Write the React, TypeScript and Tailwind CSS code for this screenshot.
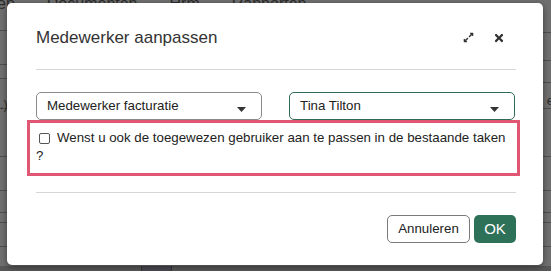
import { FaExpandAlt, FaTimes } from "react-icons/fa";

const leftLines = [30, 64, 78, 108, 156, 190, 212, 222, 246];
const rightLines = [32, 60, 82, 108, 156, 190, 212, 222, 246];

function Caret() {
  return (
    <svg width="9" height="5" viewBox="0 0 9 5" className="shrink-0">
      <path d="M0 0 L9 0 L4.5 5 Z" fill="#333" />
    </svg>
  );
}

function Select({ value, focused }: { value: string; focused?: boolean }) {
  return (
    <div
      className={
        focused
          ? "flex h-[28px] w-[226px] items-center justify-between rounded-[5px] border border-[#2f6b56] pl-[10px] pr-[15px]"
          : "flex h-[28px] w-[226px] items-center justify-between rounded-[5px] border border-[#8a8a8a] pl-[10px] pr-[15px]"
      }
    >
      <span className="text-[13.3px] text-[#222]">{value}</span>
      <span className="mt-[6px]">
        <Caret />
      </span>
    </div>
  );
}

export default function App() {
  return (
    <div
      className="relative h-[271px] w-[551px] overflow-hidden bg-[#6f6f6f]"
      style={{ fontFamily: '"Liberation Sans", Arial, sans-serif' }}
    >
      {/* Pagina achter de overlay */}
      <div className="absolute -top-[8px] left-[-3px] flex gap-[32px] text-[16px] text-[#2b2b2b]">
        <span>ep</span>
        <span>Documenten</span>
        <span>Hrm</span>
        <span>Rapporten</span>
      </div>
      {leftLines.map((y) => (
        <div
          key={"l" + y}
          className="absolute left-0 h-px w-[8px] bg-[#4e4e4e]"
          style={{ top: y }}
        />
      ))}
      {rightLines.map((y) => (
        <div
          key={"r" + y}
          className="absolute right-0 h-px w-[9px] bg-[#4e4e4e]"
          style={{ top: y }}
        />
      ))}
      <div className="absolute left-0 top-[95px] text-[13px] text-[#2b2b2b]">.)</div>
      <div className="absolute right-[-3px] top-[91px] text-[13px] text-[#2b2b2b]">e</div>
      <div className="absolute left-0 top-[266px] h-[5px] w-full bg-[#575757]" />
      <div className="absolute left-[141px] top-[266px] h-[5px] w-[31px] border-x border-[#333] bg-[#4a4852]" />

      {/* Dialoog */}
      <div className="absolute left-[7px] top-[3px] flex h-[262px] w-[536px] flex-col rounded-[5px] bg-white pl-[29px] pr-[27px] shadow-[0_2px_6px_rgba(0,0,0,0.45)]">
        <div className="flex h-[67px] items-center justify-between border-b border-[#d6d6d6] pb-[1px] pt-[4px]">
          <h2 className="text-[17px] text-[#333]">Medewerker aanpassen</h2>
          <div className="mr-[11px] flex items-center gap-[19px] text-[#333]">
            <FaExpandAlt size={11} />
            <FaTimes size={12} />
          </div>
        </div>

        <div className="flex h-[123px] flex-col border-b border-[#d6d6d6] pt-[22px]">
          <div className="flex justify-between pr-[1px]">
            <Select value="Medewerker facturatie" />
            <Select value="Tina Tilton" focused />
          </div>
          <div className="ml-[-9px] mr-[-4px] h-[56px] border-[3px] border-[#e05773] pl-[9px] pt-[6px] text-[13.3px] leading-[18px] text-[#222]">
            <div className="flex items-center gap-[7px] whitespace-nowrap">
              <span className="inline-block h-[11px] w-[11px] shrink-0 rounded-[2px] border border-[#555]" />
              <span>Wenst u ook de toegewezen gebruiker aan te passen in de bestaande taken</span>
            </div>
            <div className="-ml-[3px]">?</div>
          </div>
        </div>

        <div className="flex flex-1 items-start justify-end gap-[4px] pt-[22px]">
          <button className="h-[28px] w-[83px] rounded-[5px] border border-[#7a7a7a] bg-white text-[13.3px] text-[#222]">
            Annuleren
          </button>
          <button className="h-[28px] w-[42px] rounded-[5px] bg-[#2e7159] text-[15px] text-white">
            OK
          </button>
        </div>
      </div>
    </div>
  );
}
